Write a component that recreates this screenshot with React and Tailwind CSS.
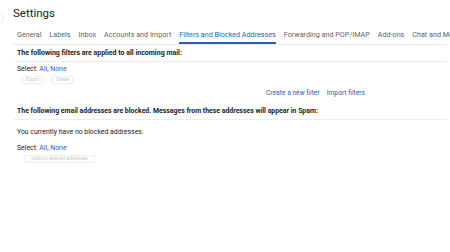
// App.jsx
const tabs = [
  "General",
  "Labels",
  "Inbox",
  "Accounts and Import",
  "Filters and Blocked Addresses",
  "Forwarding and POP/IMAP",
  "Add-ons",
  "Chat and Meet",
];

const SelectRow = () => (
  <p className="text-[6.9px] leading-[9px] text-[#222]">
    Select: <span className="text-[#2b5fb3]">All</span>,{" "}
    <span className="text-[#2b5fb3]">None</span>
  </p>
);

const FaintButton = ({ label, width }) => (
  <div
    className={`${width} h-[8px] flex items-center justify-center border border-[#eeeeee] rounded-[1px] text-[4.5px] text-[#c8c8c8]`}
  >
    {label}
  </div>
);

const App = () => {
  return (
    <div className="w-[450px] h-[252px] bg-white overflow-hidden relative font-['Roboto','Liberation_Sans',sans-serif]">
      {/* faint edge of the nav pane */}
      <div className="absolute left-[-14px] top-[10px] w-[18px] h-[16px] rounded-full border border-[#ececec]"></div>

      <div className="h-[27px] flex items-center pl-[13px]">
        <h1 className="text-[11.5px] text-[#202124] leading-none">Settings</h1>
      </div>

      {/* TABS */}
      <div className="ml-[13px] mr-[3px] h-[18px] flex items-stretch gap-[8px] pl-[4px] border-b border-[#ececec] whitespace-nowrap">
        {tabs.map((tab) => (
          <div
            key={tab}
            className={
              tab === "Filters and Blocked Addresses"
                ? "flex items-center text-[7.2px] text-[#2b5fb3] border-b-2 border-[#2b5fb3] pt-[1px]"
                : "flex items-center text-[7.2px] text-[#5f6368] border-b-2 border-transparent pt-[1px]"
            }
          >
            {tab}
          </div>
        ))}
      </div>

      {/* FILTERS */}
      <div className="ml-[14px] mr-[3px]">
        <div className="h-[17px] flex items-center pl-[3px] border-b border-[#ededed]">
          <p className="text-[7px] font-bold text-[#222]">
            The following filters are applied to all incoming mail:
          </p>
        </div>
        <div className="pl-[3px] pt-[3px]">
          <SelectRow />
          <div className="flex gap-[9px] pl-[5px] pt-[2px]">
            <FaintButton label="Export" width="w-[21px]" />
            <FaintButton label="Delete" width="w-[21px]" />
          </div>
        </div>
        <div className="flex gap-[7px] pl-[252px] pt-[5px]">
          <span className="text-[6.7px] leading-[9px] text-[#2b5fb3]">Create a new filter</span>
          <span className="text-[6.7px] leading-[9px] text-[#2b5fb3]">Import filters</span>
        </div>

        {/* BLOCKED */}
        <div className="h-[16px] mt-[6px] flex items-center pl-[3px] border-b border-[#ededed]">
          <p className="text-[6.9px] font-bold text-[#222]">
            The following email addresses are blocked. Messages from these addresses will appear in Spam:
          </p>
        </div>
        <div className="pl-[3px] pt-[8px]">
          <p className="text-[6.9px] leading-[9px] text-[#222]">You currently have no blocked addresses.</p>
        </div>
        <div className="pl-[3px] pt-[7px]">
          <SelectRow />
          <div className="pl-[7px] pt-[2px]">
            <FaintButton label="Unblock selected addresses" width="w-[71px]" />
          </div>
        </div>
      </div>
    </div>
  );
};

export default App;
